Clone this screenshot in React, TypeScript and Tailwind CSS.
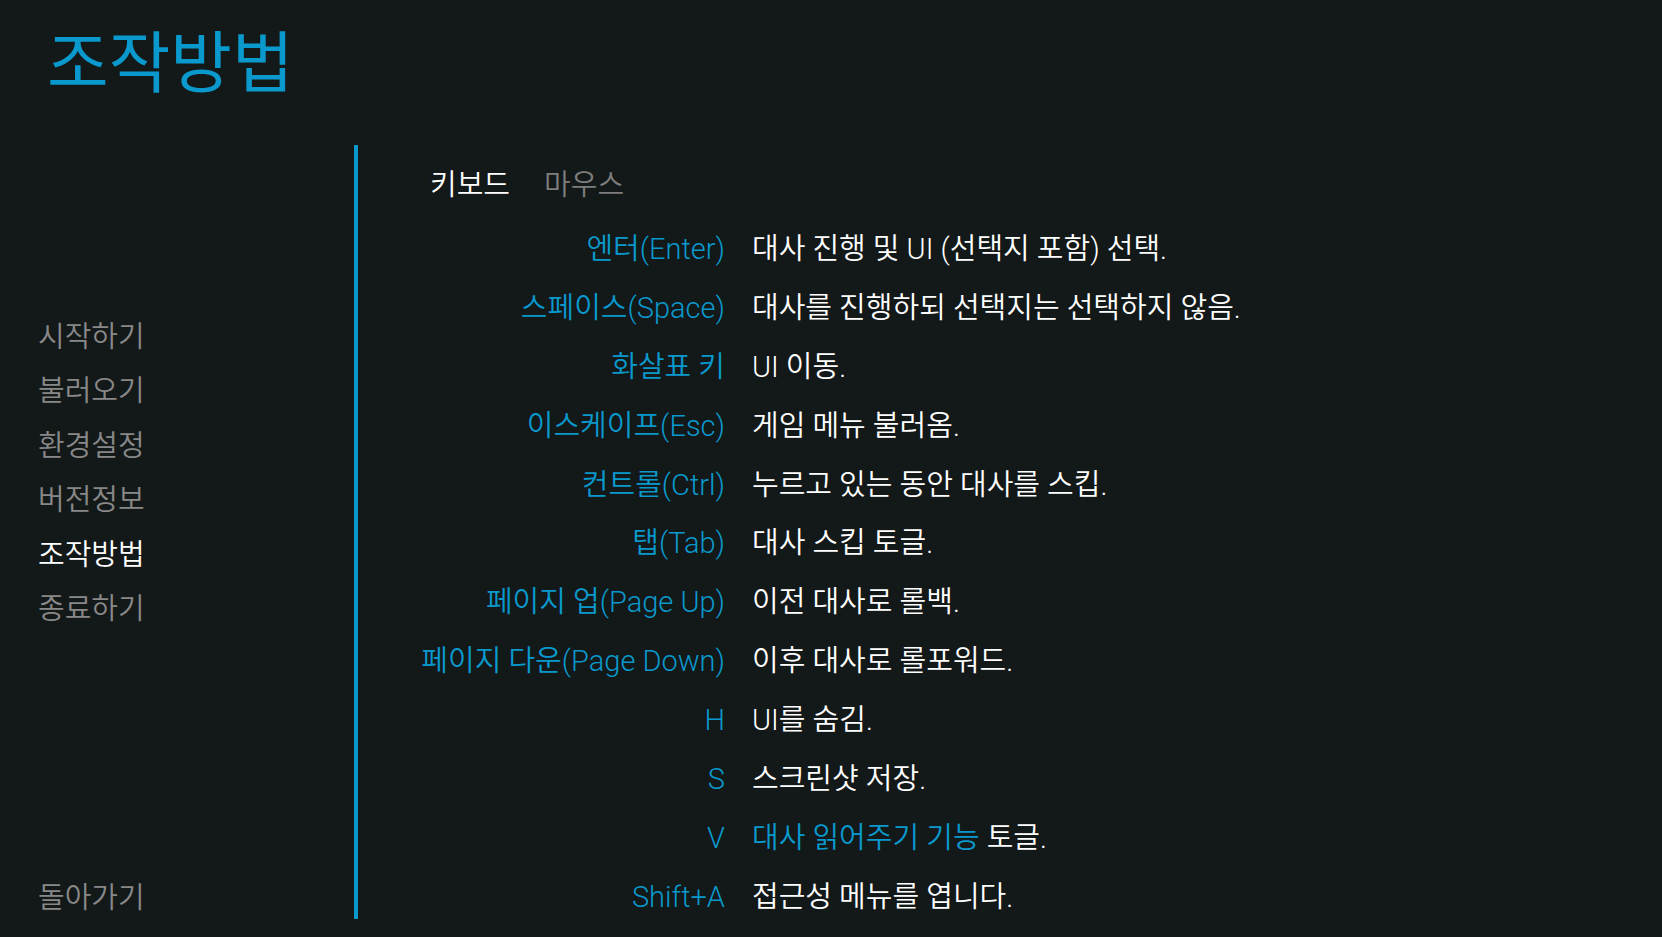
import React from 'react'

const menu = ['시작하기', '불러오기', '환경설정', '버전정보', '조작방법', '종료하기']

const keys: { k: string; d: React.ReactNode }[] = [
  { k: '엔터(Enter)', d: '대사 진행 및 UI (선택지 포함) 선택.' },
  { k: '스페이스(Space)', d: '대사를 진행하되 선택지는 선택하지 않음.' },
  { k: '화살표 키', d: 'UI 이동.' },
  { k: '이스케이프(Esc)', d: '게임 메뉴 불러옴.' },
  { k: '컨트롤(Ctrl)', d: '누르고 있는 동안 대사를 스킵.' },
  { k: '탭(Tab)', d: '대사 스킵 토글.' },
  { k: '페이지 업(Page Up)', d: '이전 대사로 롤백.' },
  { k: '페이지 다운(Page Down)', d: '이후 대사로 롤포워드.' },
  { k: 'H', d: 'UI를 숨김.' },
  { k: 'S', d: '스크린샷 저장.' },
  {
    k: 'V',
    d: (
      <>
        <span className="text-[#0a99cc]">대사 읽어주기 기능</span> 토글.
      </>
    ),
  },
  { k: 'Shift+A', d: '접근성 메뉴를 엽니다.' },
]

export default function App() {
  return (
    <div className="h-[937px] w-full overflow-hidden bg-[#131819] font-['Roboto','Noto_Sans_CJK_KR',sans-serif] font-[350]">
      <h1 className="pl-[47px] pt-[31px] text-[67px] leading-none font-normal text-[#0a99cc]">조작방법</h1>

      <div className="mt-[47px] flex items-start">
        {/* side menu */}
        <nav className="flex w-[354px] flex-col pl-[38px] pt-[165px] text-[29px]">
          {menu.map((m) => (
            <span
              key={m}
              className={`h-[54.4px] leading-[54.4px] ${m === '조작방법' ? 'text-white' : 'text-[#888888]'}`}
            >
              {m}
            </span>
          ))}
          <span className="mt-[234.6px] h-[54.4px] leading-[54.4px] text-[#888888]">돌아가기</span>
        </nav>

        <div className="h-[774px] w-[4px] bg-[#0a99cc]" />

        <main className="flex-1 text-[29px]">
          <div className="mt-[20px] flex h-[40px] items-center gap-[34px] pl-[72px] leading-[40px]">
            <span className="text-white">키보드</span>
            <span className="text-[#7d7d7d]">마우스</span>
          </div>

          <div className="mt-[15px] grid grid-cols-[367px_1fr] gap-x-[27px]">
            {keys.map((row) => (
              <React.Fragment key={row.k}>
                <span className="h-[58.9px] whitespace-nowrap text-right leading-[58.9px] text-[#0a99cc]">{row.k}</span>
                <span className="h-[58.9px] whitespace-nowrap leading-[58.9px] text-white">{row.d}</span>
              </React.Fragment>
            ))}
          </div>
        </main>
      </div>
    </div>
  )
}
